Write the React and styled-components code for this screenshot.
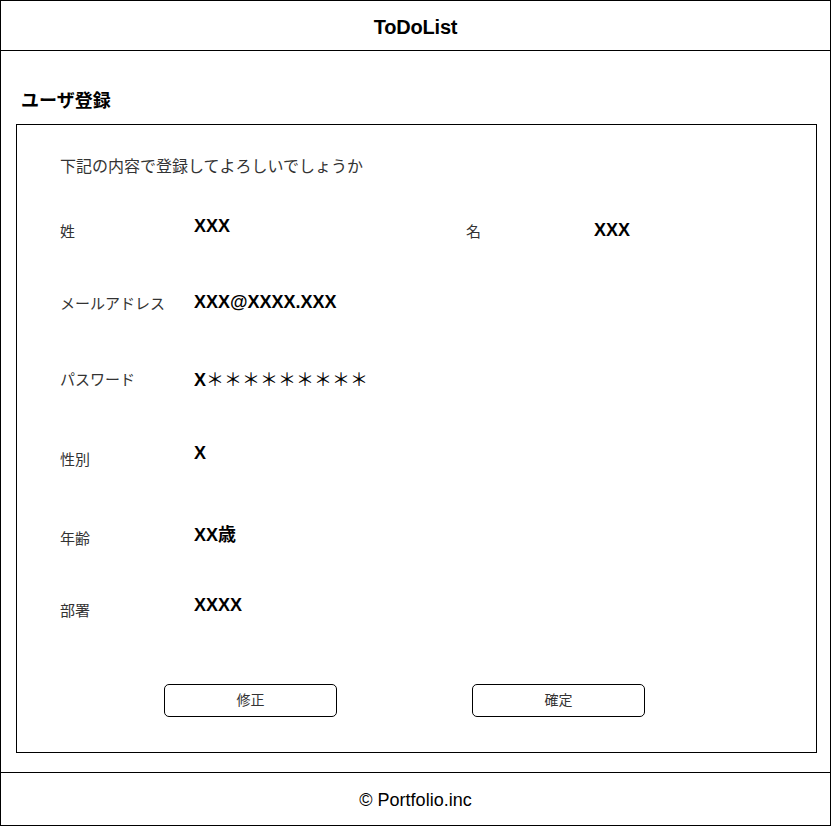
import React from "react";
import styled, { createGlobalStyle } from "styled-components";

const Global = createGlobalStyle`
  html, body { margin: 0; padding: 0; background: #fff; }
  body { font-family: "Liberation Sans", Arial, "Noto Sans CJK JP", sans-serif; color: #000; }
  * { box-sizing: border-box; }
`;

const Frame = styled.div`
  width: 831px;
  height: 826px;
  border: 1px solid #000;
  display: flex;
  flex-direction: column;
`;

const Header = styled.header`
  height: 50px;
  border-bottom: 1px solid #000;
  display: flex;
  align-items: center;
  justify-content: center;
  padding-top: 3px;
  font-size: 20px;
  font-weight: bold;
  letter-spacing: -0.2px;
`;

const Main = styled.main`
  height: 721px;
  padding-top: 40px;
  padding-left: 15px;
`;

const PageTitle = styled.h1`
  margin: 0 0 13px 5px;
  height: 20px;
  line-height: 20px;
  font-size: 18px;
  font-weight: bold;
  font-family: "Liberation Sans", "Noto Sans CJK JP", sans-serif;
`;

const Card = styled.section`
  width: 801px;
  height: 629px;
  border: 1px solid #000;
  padding: 30px 0 0 43px;
  display: flex;
  flex-direction: column;
`;

const Intro = styled.p`
  margin: 0;
  height: 20px;
  line-height: 20px;
  font-size: 16px;
  color: #333;
  font-family: "Noto Sans CJK JP", sans-serif;
`;

const Row = styled.div`
  display: flex;
  align-items: center;
  height: 40px;
  margin-top: ${(p) => p.$top}px;
`;

const Label = styled.span`
  width: ${(p) => p.$w || 134}px;
  flex: none;
  font-size: 15px;
  color: #333;
  font-family: "Noto Sans CJK JP", sans-serif;
  transform: translateY(${(p) => p.$shift || 0}px);
`;

const Value = styled.span`
  width: ${(p) => (p.$w ? p.$w + "px" : "auto")};
  flex: none;
  font-size: 18px;
  font-weight: bold;
  font-family: "Liberation Sans", "Noto Sans CJK JP", sans-serif;
  transform: translateY(${(p) => p.$shift || 0}px);
`;

const Stars = styled.span`
  font-weight: normal;
  font-family: "Noto Sans CJK JP", sans-serif;
  font-size: 18px;
`;

const Buttons = styled.div`
  display: flex;
  gap: 135px;
  margin-top: 57px;
  padding-left: 104px;
`;

const Button = styled.button`
  width: 173px;
  height: 33px;
  border: 1px solid #000;
  border-radius: 5px;
  background: #fff;
  font-size: 14px;
  color: #333;
  font-family: "Noto Sans CJK JP", sans-serif;
  padding: 0 0 3px;
  display: flex;
  align-items: center;
  justify-content: center;
`;

const Footer = styled.footer`
  height: 53px;
  border-top: 1px solid #000;
  display: flex;
  align-items: center;
  justify-content: center;
  padding-top: 3px;
  font-size: 18px;
`;

export default function App() {
  return (
    <>
      <Global />
      <Frame>
        <Header>ToDoList</Header>
        <Main>
          <PageTitle>ユーザ登録</PageTitle>
          <Card>
            <Intro>下記の内容で登録してよろしいでしょうか</Intro>
            <Row $top={33}>
              <Label $shift={2}>姓</Label>
              <Value $w={272} $shift={-2}>XXX</Value>
              <Label $w={128} $shift={2}>名</Label>
              <Value $shift={2}>XXX</Value>
            </Row>
            <Row $top={34}>
              <Label>メールアドレス</Label>
              <Value>XXX@XXXX.XXX</Value>
            </Row>
            <Row $top={36}>
              <Label>パスワード</Label>
              <Value>
                X<Stars>＊＊＊＊＊＊＊＊＊</Stars>
              </Value>
            </Row>
            <Row $top={38}>
              <Label $shift={2}>性別</Label>
              <Value $shift={-3}>X</Value>
            </Row>
            <Row $top={39}>
              <Label $shift={2}>年齢</Label>
              <Value $shift={-2}>XX歳</Value>
            </Row>
            <Row $top={32}>
              <Label $shift={2}>部署</Label>
              <Value $shift={-2}>XXXX</Value>
            </Row>
            <Buttons>
              <Button>修正</Button>
              <Button>確定</Button>
            </Buttons>
          </Card>
        </Main>
        <Footer>© Portfolio.inc</Footer>
      </Frame>
    </>
  );
}
